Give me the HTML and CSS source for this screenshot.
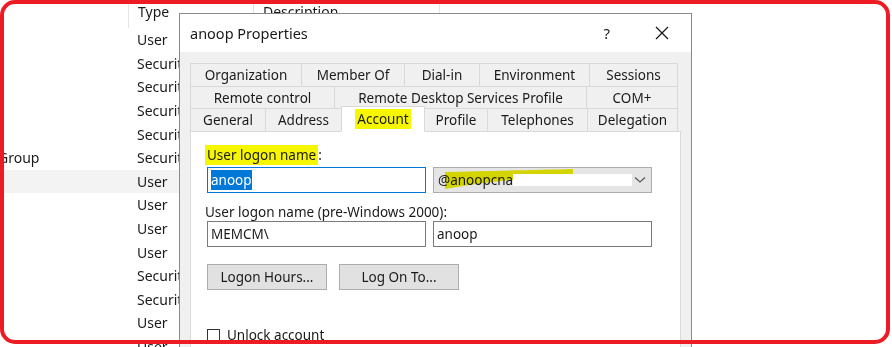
FILE: index.html
```html
<!DOCTYPE html>
<html lang="en">
<head>
    <meta charset="utf-8">
    <title>anoop Properties</title>
    <link rel="stylesheet" href="styles.css">
</head>
<body>

    <div class="liste">
        <div class="raekke hoved">
            <div class="navn"></div>
            <div class="type">Type</div>
            <div class="beskr">Description</div>
        </div>
        <div class="raekke"><div class="navn"></div><div class="type">User</div><div class="beskr"></div></div>
        <div class="raekke"><div class="navn"></div><div class="type">Security Group</div><div class="beskr"></div></div>
        <div class="raekke"><div class="navn"></div><div class="type">Security Group</div><div class="beskr"></div></div>
        <div class="raekke"><div class="navn"></div><div class="type">Security Group</div><div class="beskr"></div></div>
        <div class="raekke"><div class="navn"></div><div class="type">Security Group</div><div class="beskr"></div></div>
        <div class="raekke"><div class="navn gruppe">Group</div><div class="type">Security Group</div><div class="beskr"></div></div>
        <div class="raekke valgt"><div class="navn"></div><div class="type">User</div><div class="beskr"></div></div>
        <div class="raekke"><div class="navn"></div><div class="type">User</div><div class="beskr"></div></div>
        <div class="raekke"><div class="navn"></div><div class="type">User</div><div class="beskr"></div></div>
        <div class="raekke"><div class="navn"></div><div class="type">User</div><div class="beskr"></div></div>
        <div class="raekke"><div class="navn"></div><div class="type">Security Group</div><div class="beskr"></div></div>
        <div class="raekke"><div class="navn"></div><div class="type">Security Group</div><div class="beskr"></div></div>
        <div class="raekke"><div class="navn"></div><div class="type">User</div><div class="beskr"></div></div>
        <div class="raekke"><div class="navn"></div><div class="type">User</div><div class="beskr"></div></div>
    </div>

    <div class="dialog">
        <div class="titel">
            <span class="titeltekst">anoop Properties</span>
            <span class="hjaelp">?</span>
            <svg class="luk" width="14" height="14" viewBox="0 0 14 14">
                <path d="M1 1 L13 13 M13 1 L1 13" stroke="#1a1a1a" stroke-width="1.3" fill="none"/>
            </svg>
        </div>

        <div class="krop">
            <div class="faner">
                <div class="fanerad r1">
                    <div class="fane">Organization</div>
                    <div class="fane">Member Of</div>
                    <div class="fane">Dial-in</div>
                    <div class="fane">Environment</div>
                    <div class="fane">Sessions</div>
                </div>
                <div class="fanerad r2">
                    <div class="fane">Remote control</div>
                    <div class="fane">Remote Desktop Services Profile</div>
                    <div class="fane">COM+</div>
                </div>
                <div class="fanerad r3">
                    <div class="fane">General</div>
                    <div class="fane">Address</div>
                    <div class="fane aktiv"><span class="gul">Account</span></div>
                    <div class="fane">Profile</div>
                    <div class="fane">Telephones</div>
                    <div class="fane">Delegation</div>
                </div>
            </div>

            <div class="panel">
                <div class="etiket"><span class="gul">User logon name</span>:</div>
                <div class="felter">
                    <div class="felt fokus"><span class="markeret">anoop</span></div>
                    <div class="combo">
                        <span class="combotekst">@anoopcna</span>
                        <span class="skjult"></span>
                        <svg class="streg" width="130" height="22" viewBox="0 0 130 22">
                            <path d="M0 3 C40 2 90 1 128 0 L128 7 C90 8 45 12 0 20 Z" fill="#ecec00"/>
                        </svg>
                        <svg class="pil" width="12" height="8" viewBox="0 0 12 8">
                            <path d="M1 1.5 L6 6 L11 1.5" stroke="#555" stroke-width="1.2" fill="none"/>
                        </svg>
                    </div>
                </div>

                <div class="etiket to">User logon name (pre-Windows 2000):</div>
                <div class="felter">
                    <div class="felt">MEMCM\</div>
                    <div class="felt">anoop</div>
                </div>

                <div class="knapper">
                    <button>Logon Hours...</button>
                    <button>Log On To...</button>
                </div>

                <label class="afkryds"><span class="boks"></span>Unlock account</label>
            </div>
        </div>
    </div>

    <div class="ramme"></div>

</body>
</html>
```

FILE: styles.css
```css
* {
    box-sizing: border-box;
}

body {
    margin: 0;
    width: 892px;
    height: 347px;
    overflow: hidden;
    background-color: white;
    font-family: 'Noto Sans', 'Open Sans', sans-serif;
    color: #1a1a1a;
    position: relative;
}

/* listen bagved */

.liste {
    font-size: 14px;
    width: 440px;
}

.raekke {
    display: grid;
    grid-template-columns: 128px 125px 187px;
    height: 23.6px;
    align-items: center;
}

.raekke.hoved {
    height: 28px;
}

.hoved .type,
.hoved .beskr {
    height: 28px;
    border-left: 1px solid #e5e5e5;
    padding-top: 2px;
}

.hoved .beskr {
    border-right: 1px solid #e5e5e5;
}

.valgt {
    background-color: #f3f3f3;
}

.type,
.beskr {
    padding-left: 9px;
    white-space: nowrap;
    overflow: hidden;
}

.navn {
    white-space: nowrap;
}

.gruppe {
    margin-left: -2px;
}

/* dialogen */

.dialog {
    position: absolute;
    left: 179px;
    top: 13px;
    width: 513px;
    height: 345px;
    border: 1px solid #8a8a8a;
    background-color: #f0f0f0;
    font-size: 13.5px;
}

.titel {
    height: 38px;
    background-color: white;
    display: flex;
    align-items: center;
    padding-left: 10px;
}

.titeltekst {
    font-size: 14.5px;
    flex: 1;
}

.hjaelp {
    font-size: 15px;
    margin-right: 45px;
}

.luk {
    margin-right: 22px;
}

.krop {
    padding: 11px 11px 0 10px;
}

.fanerad {
    display: grid;
    width: 488px;
}

.r1 {
    grid-template-columns: 112px 103px 75px 110px 88px;
    height: 23px;
}

.r2 {
    grid-template-columns: 145px 252px 91px;
    height: 22px;
}

.r3 {
    grid-template-columns: 76px 76px 83px 63px 100px 90px;
    height: 24px;
    position: relative;
    z-index: 1;
}

.fane {
    border: 1px solid #d9d9d9;
    border-left: none;
    border-bottom: none;
    display: flex;
    align-items: center;
    justify-content: center;
    white-space: nowrap;
    background-color: #f0f0f0;
}

.fane:first-child {
    border-left: 1px solid #d9d9d9;
}

.r3 .fane {
    border-bottom: 1px solid #d9d9d9;
}

.r3 .aktiv {
    background-color: white;
    border-left: 1px solid #d9d9d9;
    border-bottom: 1px solid white;
    margin-top: -2px;
    margin-left: -1px;
    height: 26px;
}

.gul {
    background-color: #f6f600;
    padding: 1px 2px;
}

.panel {
    background-color: white;
    border: 1px solid #d9d9d9;
    width: 491px;
    height: 230px;
    margin-top: -1px;
    padding: 14px 0 0 16px;
}

.etiket {
    height: 21px;
    line-height: 18px;
    margin-left: -2px;
}

.etiket.to {
    margin-top: 10px;
    height: 18px;
}

.felter {
    display: flex;
    gap: 7px;
}

.felt {
    width: 219px;
    height: 26px;
    border: 1px solid #7a7a7a;
    background-color: white;
    padding-left: 3px;
    display: flex;
    align-items: center;
}

.felt.fokus {
    border-color: #0078d7;
}

.markeret {
    background-color: #0078d7;
    color: white;
    padding: 1px 0;
}

.combo {
    width: 219px;
    height: 26px;
    border: 1px solid #adadad;
    background-color: #e5e5e5;
    display: flex;
    align-items: center;
    padding-left: 4px;
    position: relative;
}

.combotekst {
    position: relative;
    z-index: 1;
}

.skjult {
    width: 119px;
    height: 12px;
    background-color: white;
    position: relative;
    z-index: 2;
}

.streg {
    position: absolute;
    left: 11px;
    top: 1px;
    mix-blend-mode: multiply;
    z-index: 1;
}

.pil {
    margin-left: auto;
    margin-right: 5px;
}

.knapper {
    display: flex;
    gap: 12px;
    margin-top: 17px;
}

button {
    font-family: 'Noto Sans', 'Open Sans', sans-serif;
    font-size: 13.5px;
    color: #1a1a1a;
    width: 120px;
    height: 26px;
    background-color: #e1e1e1;
    border: 1px solid #adadad;
    padding: 0;
}

.afkryds {
    display: flex;
    align-items: center;
    gap: 7px;
    margin-top: 36px;
}

.boks {
    width: 13px;
    height: 13px;
    border: 1px solid #333;
    background-color: white;
}

/* den roede ramme */

.ramme {
    position: absolute;
    left: 0;
    top: 0;
    width: 890px;
    height: 344px;
    border: 4px solid #ed1c24;
    border-radius: 15px;
}
```
